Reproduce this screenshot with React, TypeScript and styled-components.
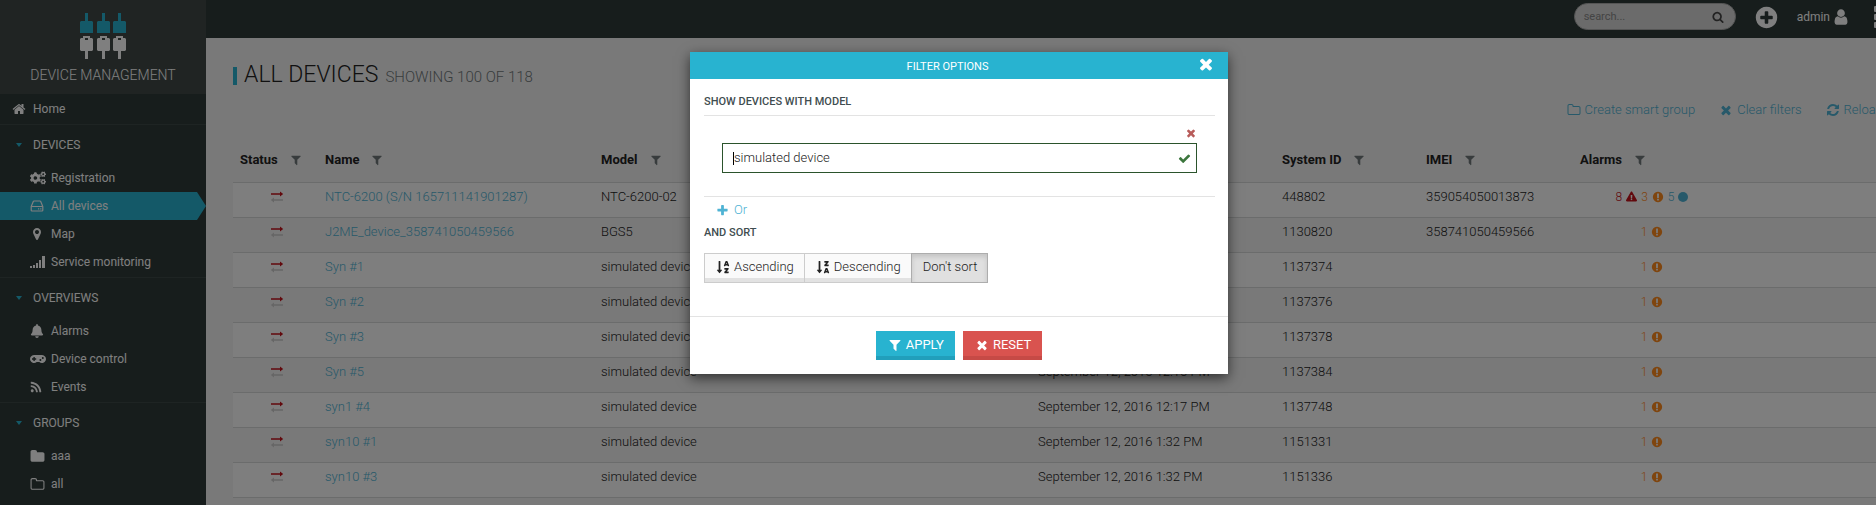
import React from "react";
import styled, { createGlobalStyle, css } from "styled-components";
import {
  FaBell,
  FaCogs,
  FaExclamationTriangle,
  FaRss,
  FaSortAlphaDown,
  FaSortAlphaDownAlt,
} from "react-icons/fa";

const color = {
  accent: "#28b3d0",
  accentDark: "#219fbb",
  danger: "#d9534f",
  dangerDark: "#c64a46",
  link: "#4fb3d4",
  bar: "#2e3a38",
  brand: "#404947",
  page: "#f3f3f3",
  text: "#222",
  muted: "#70797b",
  line: "#d6d8d8",
  critical: "#c4121b",
  major: "#ff8a1c",
};

const GlobalStyle = createGlobalStyle`
  *, *::before, *::after { box-sizing: border-box; }
  html, body, #root { height: 100%; }
  body {
    margin: 0;
    overflow: hidden;
    font-family: Roboto, "Liberation Sans", sans-serif;
    font-size: 13px;
    font-weight: 300;
    line-height: 20px;
    color: ${color.text};
  }
  button, input { font: inherit; color: inherit; }
  a { text-decoration: none; }
  svg { display: block; flex: none; }
`;

/* ---------- icons ---------- */

const paths = {
  times:
    "M1490 1322q0 40-28 68l-136 136q-28 28-68 28t-68-28l-294-294-294 294q-28 28-68 28t-68-28l-136-136q-28-28-28-68t28-68l294-294-294-294q-28-28-28-68t28-68l136-136q28-28 68-28t68 28l294 294 294-294q28-28 68-28t68 28l136 136q28 28 28 68t-28 68l-294 294 294 294q28 28 28 68z",
  check:
    "M1671 566q0 40-28 68l-724 724-136 136q-28 28-68 28t-68-28l-136-136-362-362q-28-28-28-68t28-68l136-136q28-28 68-28t68 28l294 295 656-657q28-28 68-28t68 28l136 136q28 28 28 68z",
  plus:
    "M1600 736v192q0 40-28 68t-68 28h-416v416q0 40-28 68t-68 28h-192q-40 0-68-28t-28-68v-416h-416q-40 0-68-28t-28-68v-192q0-40 28-68t68-28h416v-416q0-40 28-68t68-28h192q40 0 68 28t28 68v416h416q40 0 68 28t28 68z",
  plusCircle:
    "M1344 960v-128q0-26-19-45t-45-19h-256v-256q0-26-19-45t-45-19h-128q-26 0-45 19t-19 45v256h-256q-26 0-45 19t-19 45v128q0 26 19 45t45 19h256v256q0 26 19 45t45 19h128q26 0 45-19t19-45v-256h256q26 0 45-19t19-45zm320-64q0 209-103 385.500t-279.500 279.500-385.500 103-385.500-103-279.500-279.500-103-385.500 103-385.500 279.500-279.500 385.500-103 385.500 103 279.500 279.500 103 385.500z",
  filter:
    "M1595 295q17 41-14 70l-493 493v742q0 42-39 59-13 5-25 5-27 0-45-19l-256-256q-19-19-19-45v-486l-493-493q-31-29-14-70 17-39 59-39h1280q42 0 59 39z",
  home:
    "M1472 992v480q0 26-19 45t-45 19h-384v-384h-256v384h-384q-26 0-45-19t-19-45v-480q0-1 .5-3t.5-3l575-474 575 474q1 2 1 6zm223-69l-62 74q-8 9-21 11h-3q-13 0-21-7l-692-577-692 577q-12 8-24 7-13-2-21-11l-62-74q-8-10-7-23.500t11-21.500l719-599q32-26 76-26t76 26l244 204v-195q0-14 9-23t23-9h192q14 0 23 9t9 23v408l219 182q10 8 11 21.500t-7 23.500z",
  folder:
    "M1728 608v704q0 92-66 158t-158 66h-1216q-92 0-158-66t-66-158v-960q0-92 66-158t158-66h320q92 0 158 66t66 158v32h672q92 0 158 66t66 158z",
  folderOpen:
    "M1600 1312v-704q0-40-28-68t-68-28h-704q-40 0-68-28t-28-68v-64q0-40-28-68t-68-28h-320q-40 0-68 28t-28 68v960q0 40 28 68t68 28h1216q40 0 68-28t28-68zm128-704v704q0 92-66 158t-158 66h-1216q-92 0-158-66t-66-158v-960q0-92 66-158t158-66h320q92 0 158 66t66 158v32h672q92 0 158 66t66 158z",
  marker:
    "M1152 640q0-106-75-181t-181-75-181 75-75 181 75 181 181 75 181-75 75-181zm256 0q0 109-33 179l-364 774q-16 33-47.500 52t-67.500 19-67.500-19-46.500-52l-365-774q-33-70-33-179 0-212 150-362t362-150 362 150 150 362z",
  exclamation:
    "M896 128q209 0 385.500 103t279.500 279.500 103 385.500-103 385.500-279.500 279.500-385.500 103-385.500-103-279.500-279.500-103-385.500 103-385.500 279.500-279.500 385.500-103zm128 1247v-190q0-14-9-23.500t-22-9.500h-192q-13 0-23 10t-10 23v190q0 13 10 23t23 10h192q13 0 22-9.500t9-23.500zm-2-344l18-621q0-12-10-18-10-8-24-8h-220q-14 0-24 8-10 6-10 18l17 621q0 10 10 17.500t24 7.500h185q14 0 23.500-7.500t10.500-17.500z",
  user:
    "M1536 1399q0 109-62.500 187t-150.500 78h-854q-88 0-150.500-78t-62.500-187q0-85 8.500-160.500t31.500-152 58.500-131 94-89 134.500-34.500q131 128 313 128t313-128q76 0 134.500 34.500t94 89 58.500 131 31.500 152 8.500 160.500zm-256-887q0 159-112.500 271.500t-271.500 112.500-271.500-112.500-112.500-271.500 112.500-271.500 271.500-112.500 271.500 112.500 112.500 271.500z",
  refresh:
    "M1639 1056q0 5-1 7-64 268-268 434.500t-478 166.500q-146 0-282.500-55t-243.500-157l-129 129q-19 19-45 19t-45-19-19-45v-448q0-26 19-45t45-19h448q26 0 45 19t19 45-19 45l-137 137q71 66 161 102t187 36q134 0 250-65t186-179q11-17 53-117 8-23 30-23h192q13 0 22.500 9.500t9.500 22.500zm25-800v448q0 26-19 45t-45 19h-448q-26 0-45-19t-19-45 19-45l138-138q-148-137-349-137-134 0-250 65t-186 179q-11 17-53 117-8 23-30 23h-199q-13 0-22.500-9.500t-9.500-22.500v-7q65-268 270-434.500t480-166.500q146 0 284 55.500t245 156.500l130-129q19-19 45-19t45 19 19 45z",
  search:
    "M1216 832q0-185-131.500-316.500t-316.500-131.500-316.500 131.500-131.500 316.500 131.500 316.500 316.500 131.500 316.500-131.500 131.500-316.500zm512 832q0 52-38 90t-90 38q-54 0-90-38l-343-342q-179 124-399 124-143 0-273.500-55.500t-225-150-150-225-55.500-273.500 55.500-273.500 150-225 225-150 273.500-55.500 273.500 55.500 225 150 150 225 55.500 273.500q0 220-124 399l343 343q37 37 37 90z",
};

type IconProps = { name: keyof typeof paths; size?: number };

const Icon = ({ name, size = 14 }: IconProps) => (
  <svg width={size} height={size} viewBox="0 0 1792 1792" fill="currentColor" aria-hidden="true">
    <path d={paths[name]} />
  </svg>
);

const DriveIcon = () => (
  <svg width="14" height="14" viewBox="0 0 14 14" fill="none" stroke="currentColor" aria-hidden="true">
    <path d="M1.200 7.500L3.300 2.500Q3.500 2 4 2H10Q10.500 2 10.700 2.500L12.800 7.500V11.300Q12.800 12 12 12H2Q1.200 12 1.200 11.300ZM1.200 7.500H12.800" strokeWidth="1.200" />
    <path d="M8 9.800H9.200M10.200 9.800H11.400" strokeWidth="1.200" />
  </svg>
);

const SignalIcon = () => (
  <svg width="16" height="14" viewBox="0 0 16 14" fill="currentColor" aria-hidden="true">
    <path d="M0 11h2v2H0zM3 10h2v3H3zM6 8h2v5H6zM9 5h2v8H9zM12 1h3v12h-3z" />
  </svg>
);

const GamepadIcon = () => (
  <svg width="16" height="14" viewBox="0 0 16 14" fill="currentColor" fillRule="evenodd" aria-hidden="true">
    <path d="M4 3H12A4 4 0 1 1 9.300 10H6.700A4 4 0 1 1 4 3ZM3.400 4.900V6.300H2V7.700H3.400V9.100H4.800V7.700H6.200V6.300H4.800V4.900ZM10.400 7A1 1 0 1 0 10.400 9A1 1 0 1 0 10.400 7ZM12.800 5A1 1 0 1 0 12.800 7A1 1 0 1 0 12.800 5Z" />
  </svg>
);

const GridIcon = () => (
  <svg width="22" height="22" viewBox="0 0 22 22" fill="currentColor" aria-hidden="true">
    {[0, 8, 16].map((y) =>
      [0, 8, 16].map((x) => <rect key={`${x}-${y}`} x={x} y={y} width="6" height="6" rx="1" />)
    )}
  </svg>
);

const TransferIcon = () => (
  <svg width="14" height="12" viewBox="0 0 14 12" aria-hidden="true">
    <path d="M1 2.200H10V.4L13.200 3L10 5.600V3.800H1Z" fill="#c4121b" />
    <path d="M13 8.200H4V6.400L.8 9L4 11.600V9.800H13Z" fill="#ccc" />
  </svg>
);

const CableLogo = () => (
  <svg width="46" height="47" viewBox="0 0 46 47" aria-hidden="true">
    {[0, 17, 33].map((x) => (
      <g key={x} transform={`translate(${x} 0)`}>
        <path d="M5 0H8V8H12L13 9V20H0V9L1 8H5Z" fill={color.accent} />
        <path
          d="M3 23H10V25H12L13 26V37L12 38H8V46H5V38H1L0 37V26L1 25H3ZM5 25V27H8V25Z"
          fill="#fff"
          fillRule="evenodd"
        />
      </g>
    ))}
  </svg>
);

/* ---------- page frame ---------- */

const Viewport = styled.div`
  height: 100%;
  overflow: hidden;
`;

const Page = styled.div`
  position: relative;
  display: flex;
  width: calc(100% + 42px);
  min-height: 100%;
  background: ${color.page};
`;

const Sidebar = styled.nav`
  flex: none;
  width: 206px;
  background: ${color.bar};
  color: #fff;
  font-size: 12px;
  font-weight: 400;
`;

const Brand = styled.div`
  display: flex;
  flex-direction: column;
  align-items: center;
  gap: 3px;
  height: 94px;
  padding-top: 13px;
  background: ${color.brand};
  font-size: 14px;
  font-weight: 300;
  line-height: 24px;
`;

const NavLink = styled.a<{ $active?: boolean; $top?: boolean }>`
  display: flex;
  align-items: center;
  gap: 5px;
  height: ${(p) => (p.$top ? 30 : 28)}px;
  padding-left: ${(p) => (p.$top ? 12 : 30)}px;
  color: #fff;
  ${(p) =>
    p.$active &&
    css`
      background: ${color.accent};
      clip-path: polygon(0 0, calc(100% - 9px) 0, 100% 50%, calc(100% - 9px) 100%, 0 100%);
    `}
`;

const NavIcon = styled.span`
  display: flex;
  width: 16px;
`;

const NavSection = styled.section`
  padding-bottom: 1px;
  border-top: 1px solid #3d4847;
`;

const NavHeading = styled.button`
  display: flex;
  align-items: center;
  gap: 11px;
  width: 100%;
  height: 39px;
  padding: 0 0 0 16px;
  border: 0;
  background: none;
  color: #fff;
  text-align: left;
`;

const Caret = styled.span`
  border: 3px solid transparent;
  border-top: 4px solid ${color.accent};
  border-bottom: 0;
`;

const Main = styled.main`
  flex: 1;
  min-width: 0;
`;

const TopBar = styled.header`
  display: flex;
  justify-content: flex-end;
  align-items: flex-start;
  height: 38px;
  padding: 3px 22px 0 0;
  background: ${color.bar};
  color: #fff;
`;

const SearchBox = styled.label`
  display: flex;
  align-items: center;
  width: 162px;
  height: 27px;
  margin-right: 18px;
  padding: 0 11px 0 9px;
  border: 1px solid #aaa;
  border-radius: 14px;
  background: #d6d6d6;
  color: #444;

  input {
    flex: 1;
    min-width: 0;
    padding: 0;
    border: 0;
    outline: 0;
    background: none;
    font-size: 11px;
    font-weight: 400;
  }
  input::placeholder { color: #888; opacity: 1; }
`;

const BarButton = styled.button`
  display: flex;
  align-items: center;
  gap: 2px;
  height: 28px;
  margin: 0 18px 0 0;
  padding: 0;
  border: 0;
  background: none;
  font-size: 12px;
  font-weight: 400;

  &:last-child { margin: 0; padding-left: 6px; }
`;

const Content = styled.div`
  padding: 24px 26px 0 27px;
`;

const Title = styled.h1`
  display: flex;
  align-items: baseline;
  gap: 7px;
  margin: 0;
  font-size: 23px;
  font-weight: 300;
  line-height: 26px;

  &::before {
    content: "";
    align-self: center;
    width: 4px;
    height: 18px;
    background: ${color.accent};
  }
  small {
    font-size: 15px;
    font-weight: 300;
    color: ${color.muted};
  }
`;

const Actions = styled.div`
  display: flex;
  justify-content: flex-end;
  gap: 24px;
  padding: 10px 9px 0 0;
`;

const Action = styled.a`
  display: flex;
  align-items: center;
  gap: 4px;
  color: ${color.link};
`;

/* ---------- device table ---------- */

const Table = styled.table`
  width: 100%;
  margin-top: 20px;
  border-collapse: collapse;
  table-layout: fixed;

  th {
    height: 42px;
    padding: 0 7px 2px;
    text-align: left;
    font-weight: 700;
  }
  td {
    height: 35px;
    padding: 3px 7px 9px;
    border-top: 1px solid ${color.line};
    white-space: nowrap;
  }
  tbody { border-bottom: 1px solid ${color.line}; }
  tbody tr:nth-child(odd) { background: #fdfdfd; }
  td a { color: ${color.link}; }
`;

const Col = styled.col<{ $width?: number }>`
  width: ${(p) => (p.$width ? `${p.$width}px` : "auto")};
`;

const HeaderCell = styled.span`
  display: flex;
  align-items: center;
  gap: 12px;

  button {
    padding: 0;
    border: 0;
    background: none;
    color: ${color.muted};
  }
`;

const StatusMark = styled.span`
  display: flex;
  justify-content: center;
  padding-left: 2px;
`;

const AlarmList = styled.span`
  display: flex;
  align-items: center;
  justify-content: center;
  gap: 4px;
  font-size: 12px;
`;

const Alarm = styled.span<{ $color: string }>`
  display: flex;
  align-items: center;
  gap: 4px;
  color: ${(p) => p.$color};
`;

const Dot = styled.span`
  width: 10px;
  height: 10px;
  border-radius: 50%;
  background: currentColor;
`;

/* ---------- filter dialog ---------- */

const Backdrop = styled.div`
  position: absolute;
  inset: 0;
  display: flex;
  justify-content: center;
  align-items: flex-start;
  padding-top: 52px;
  background: rgba(0, 0, 0, 0.5);
`;

const Dialog = styled.div`
  width: 538px;
  background: #fff;
  box-shadow: 0 4px 12px rgba(0, 0, 0, 0.6);
`;

const DialogHeader = styled.div`
  display: flex;
  align-items: flex-start;
  height: 27px;
  padding: 3px 13px 0 8px;
  background: ${color.accent};
  color: #fff;

  h2 {
    flex: 1;
    margin: 0;
    padding-top: 2px;
    text-align: center;
    font-size: 11px;
    font-weight: 400;
  }
`;

const PlainButton = styled.button<{ $color: string }>`
  display: flex;
  align-items: center;
  gap: 5px;
  padding: 0;
  border: 0;
  background: none;
  color: ${(p) => p.$color};
`;

const DialogBody = styled.div`
  padding: 13px 13px 33px 14px;
`;

const GroupHeading = styled.h3`
  margin: 0;
  font-size: 11px;
  font-weight: 500;
  color: #3f4d50;
`;

const Condition = styled.div`
  display: flex;
  flex-direction: column;
  align-items: flex-end;
  gap: 4px;
  margin-top: 3px;
  padding: 11px 18px 23px;
  border: solid #e3e3e3;
  border-width: 1px 0;
`;

const ModelField = styled.label`
  display: flex;
  align-items: center;
  width: 100%;
  height: 30px;
  padding: 0 5px 0 10px;
  border: 1px solid #2b542c;
  color: #3c763d;

  input {
    flex: 1;
    min-width: 0;
    padding: 0;
    border: 0;
    outline: 0;
    background: none;
    color: ${color.text};
  }
`;

const InsertionMark = styled.span`
  width: 1px;
  height: 13px;
  background: #000;
`;

const OrRow = styled.div`
  padding: 3px 0 3px 12px;
`;

const SortGroup = styled.div`
  display: flex;
  margin-top: 10px;
`;

const SortButton = styled.button<{ $pressed?: boolean }>`
  display: flex;
  align-items: center;
  gap: 4px;
  height: 30px;
  margin-right: -1px;
  padding: 0 10px 2px 11px;
  border: 1px solid ${(p) => (p.$pressed ? "#adadad" : "#ccc")};
  background: ${(p) => (p.$pressed ? "#e0e0e0" : "#fafafa")};
  box-shadow: ${(p) =>
    p.$pressed ? "inset 0 3px 5px rgba(0, 0, 0, 0.125)" : "inset 0 -4px 0 #e2e2e2"};
`;

const DialogFooter = styled.div`
  display: flex;
  justify-content: center;
  gap: 8px;
  padding: 14px 0;
  border-top: 1px solid #e3e3e3;
`;

const CommandButton = styled.button<{ $danger?: boolean }>`
  display: flex;
  align-items: center;
  gap: 4px;
  height: 29px;
  padding: 0 11px 2px 12px;
  border: 0;
  background: ${(p) => (p.$danger ? color.danger : color.accent)};
  box-shadow: inset 0 -4px 0 ${(p) => (p.$danger ? color.dangerDark : color.accentDark)};
  color: #fff;
  font-weight: 400;
`;

/* ---------- data ---------- */

const nav = [
  {
    title: "DEVICES",
    items: [
      { label: "Registration", icon: <FaCogs size={16} /> },
      { label: "All devices", icon: <DriveIcon />, active: true },
      { label: "Map", icon: <Icon name="marker" /> },
      { label: "Service monitoring", icon: <SignalIcon /> },
    ],
  },
  {
    title: "OVERVIEWS",
    items: [
      { label: "Alarms", icon: <FaBell size={14} /> },
      { label: "Device control", icon: <GamepadIcon /> },
      { label: "Events", icon: <FaRss size={12} /> },
    ],
  },
  {
    title: "GROUPS",
    items: [
      { label: "aaa", icon: <Icon name="folder" size={15} /> },
      { label: "all", icon: <Icon name="folderOpen" size={15} /> },
    ],
  },
];

const columns = [
  { label: "Status", width: 85 },
  { label: "Name", width: 276 },
  { label: "Model", width: 437 },
  { label: "", width: 244 },
  { label: "System ID", width: 144 },
  { label: "IMEI", width: 154 },
  { label: "Alarms", width: 158 },
  { label: "" },
];

const devices = [
  { name: "NTC-6200 (S/N 165711141901287)", model: "NTC-6200-02", date: "", id: "448802", imei: "359054050013873", many: true },
  { name: "J2ME_device_358741050459566", model: "BGS5", date: "", id: "1130820", imei: "358741050459566" },
  { name: "Syn #1", model: "simulated device", date: "", id: "1137374" },
  { name: "Syn #2", model: "simulated device", date: "", id: "1137376" },
  { name: "Syn #3", model: "simulated device", date: "", id: "1137378" },
  { name: "Syn #5", model: "simulated device", date: "September 12, 2016 12:16 PM", id: "1137384" },
  { name: "syn1 #4", model: "simulated device", date: "September 12, 2016 12:17 PM", id: "1137748" },
  { name: "syn10 #1", model: "simulated device", date: "September 12, 2016 1:32 PM", id: "1151331" },
  { name: "syn10 #3", model: "simulated device", date: "September 12, 2016 1:32 PM", id: "1151336" },
];

export default function App() {
  return (
    <Viewport>
      <GlobalStyle />
      <Page>
        <Sidebar>
          <Brand>
            <CableLogo />
            DEVICE MANAGEMENT
          </Brand>
          <NavLink href="#home" $top>
            <NavIcon><Icon name="home" /></NavIcon>
            Home
          </NavLink>
          {nav.map((section) => (
            <NavSection key={section.title}>
              <NavHeading type="button">
                <Caret />
                {section.title}
              </NavHeading>
              {section.items.map((item) => (
                <NavLink key={item.label} href="#" $active={"active" in item}>
                  <NavIcon>{item.icon}</NavIcon>
                  {item.label}
                </NavLink>
              ))}
            </NavSection>
          ))}
        </Sidebar>

        <Main>
          <TopBar>
            <SearchBox>
              <input type="search" placeholder="search..." aria-label="Search" />
              <Icon name="search" size={12} />
            </SearchBox>
            <BarButton type="button" aria-label="Add"><Icon name="plusCircle" size={25} /></BarButton>
            <BarButton type="button">admin <Icon name="user" size={18} /></BarButton>
            <BarButton type="button" aria-label="Applications"><GridIcon /></BarButton>
          </TopBar>

          <Content>
            <Title>
              ALL DEVICES <small>SHOWING 100 OF 118</small>
            </Title>
            <Actions>
              <Action href="#group"><Icon name="folderOpen" /> Create smart group</Action>
              <Action href="#clear"><Icon name="times" /> Clear filters</Action>
              <Action href="#reload"><Icon name="refresh" /> Reload</Action>
            </Actions>

            <Table>
              <colgroup>
                {columns.map((c, i) => <Col key={i} $width={c.width} />)}
              </colgroup>
              <thead>
                <tr>
                  {columns.map((c, i) => (
                    <th key={i}>
                      {c.label && (
                        <HeaderCell>
                          {c.label}
                          <button type="button" aria-label={`Filter ${c.label}`}>
                            <Icon name="filter" size={12} />
                          </button>
                        </HeaderCell>
                      )}
                    </th>
                  ))}
                </tr>
              </thead>
              <tbody>
                {devices.map((d) => (
                  <tr key={d.id}>
                    <td><StatusMark><TransferIcon /></StatusMark></td>
                    <td><a href="#device">{d.name}</a></td>
                    <td>{d.model}</td>
                    <td>{d.date}</td>
                    <td>{d.id}</td>
                    <td>{d.imei}</td>
                    <td>
                      <AlarmList>
                        {d.many && <Alarm $color={color.critical}>8 <FaExclamationTriangle size={11} /></Alarm>}
                        <Alarm $color={color.major}>{d.many ? 3 : 1} <Icon name="exclamation" size={12} /></Alarm>
                        {d.many && <Alarm $color={color.link}>5 <Dot /></Alarm>}
                      </AlarmList>
                    </td>
                    <td />
                  </tr>
                ))}
              </tbody>
            </Table>
          </Content>
        </Main>

        <Backdrop>
          <Dialog role="dialog" aria-modal="true" aria-labelledby="filter-title">
            <DialogHeader>
              <h2 id="filter-title">FILTER OPTIONS</h2>
              <PlainButton type="button" $color="#fff" aria-label="Close"><Icon name="times" size={18} /></PlainButton>
            </DialogHeader>
            <DialogBody>
              <GroupHeading>SHOW DEVICES WITH MODEL</GroupHeading>
              <Condition>
                <PlainButton type="button" $color="#b85c5a" aria-label="Remove condition"><Icon name="times" size={12} /></PlainButton>
                <ModelField>
                  <InsertionMark />
                  <input type="text" defaultValue="simulated device" aria-label="Model" />
                  <Icon name="check" size={13} />
                </ModelField>
              </Condition>
              <OrRow>
                <PlainButton type="button" $color={color.link}><Icon name="plus" size={13} /> Or</PlainButton>
              </OrRow>
              <GroupHeading>AND SORT</GroupHeading>
              <SortGroup>
                <SortButton type="button"><FaSortAlphaDown size={14} /> Ascending</SortButton>
                <SortButton type="button"><FaSortAlphaDownAlt size={14} /> Descending</SortButton>
                <SortButton type="button" $pressed>Don't sort</SortButton>
              </SortGroup>
            </DialogBody>
            <DialogFooter>
              <CommandButton type="button"><Icon name="filter" /> APPLY</CommandButton>
              <CommandButton type="button" $danger><Icon name="times" /> RESET</CommandButton>
            </DialogFooter>
          </Dialog>
        </Backdrop>
      </Page>
    </Viewport>
  );
}
